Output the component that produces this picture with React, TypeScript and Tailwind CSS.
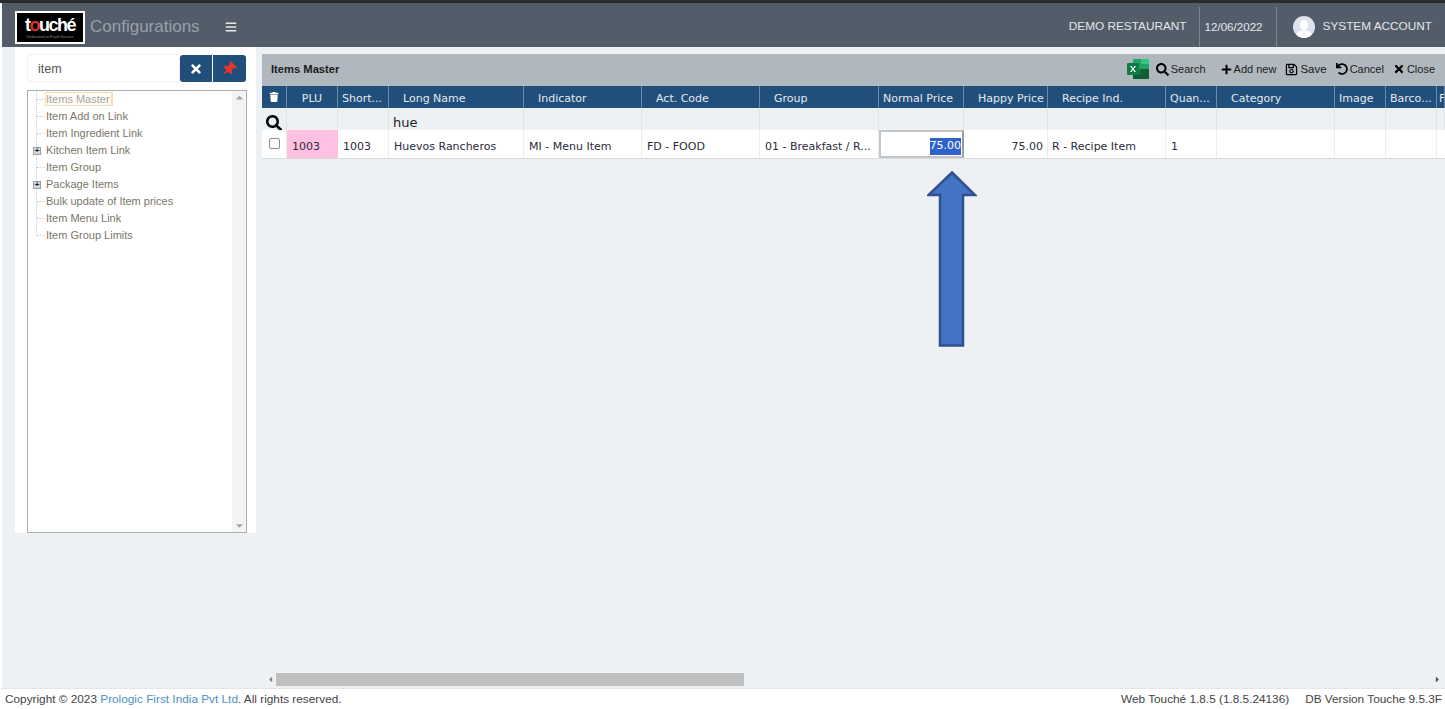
import { FaBars, FaPlus, FaRegSave, FaSearch, FaThumbtack, FaTimes, FaTrash, FaUndo, FaCaretDown, FaCaretLeft, FaCaretRight, FaCaretUp } from 'react-icons/fa';

const gridCols =
  'grid grid-cols-[25px_51px_51px_135px_118px_118px_119px_85px_84px_118px_51px_118px_51px_51px_8px]';

const columns = [
  { label: 'PLU', cls: 'justify-center' },
  { label: 'Short...', cls: 'pl-[4px]' },
  { label: 'Long Name', cls: 'pl-[14px]' },
  { label: 'Indicator', cls: 'pl-[14px]' },
  { label: 'Act. Code', cls: 'pl-[14px]' },
  { label: 'Group', cls: 'pl-[14px]' },
  { label: 'Normal Price', cls: 'pl-[4px]' },
  { label: 'Happy Price', cls: 'pl-[14px]' },
  { label: 'Recipe Ind.', cls: 'pl-[14px]' },
  { label: 'Quan...', cls: 'pl-[4px]' },
  { label: 'Category', cls: 'pl-[14px]' },
  { label: 'Image', cls: 'pl-[4px]' },
  { label: 'Barco...', cls: 'pl-[4px]' },
  { label: 'F', cls: 'pl-[2px]' },
];

const row = ['1003', 'Huevos Rancheros', 'MI - Menu Item', 'FD - FOOD', '01 - Breakfast / R...'];

const tree = [
  { label: 'Item Add on Link' },
  { label: 'Item Ingredient Link' },
  { label: 'Kitchen Item Link', expand: true },
  { label: 'Item Group' },
  { label: 'Package Items', expand: true },
  { label: 'Bulk update of Item prices' },
  { label: 'Item Menu Link' },
  { label: 'Item Group Limits', last: true },
];

function TreeRow({ label, expand, active, last }: { label: string; expand?: boolean; active?: boolean; last?: boolean }) {
  return (
    <div className="flex h-[17px] items-center">
      <div className="relative flex h-full w-[18px] items-center">
        <span className={`absolute left-[8px] w-0 border-l border-dotted border-[#cfcfcf] ${last ? 'top-0 h-[9px]' : 'top-0 h-full'}`} />
        {expand ? (
          <span className="relative ml-[5px] flex h-[8px] w-[8px] items-center justify-center border border-[#9aa0a8] bg-[#d5d9df] text-[8px] leading-none font-bold text-[#222]">
            +
          </span>
        ) : (
          <span className="ml-[9px] h-0 w-[8px] border-t border-dotted border-[#cfcfcf]" />
        )}
      </div>
      {active ? (
        <span className="-mt-[2px] -ml-px border border-r-2 border-[#fbdca8] bg-[#fffdf8] pr-[1px] leading-[12px] text-[#a5a5a5]">{label}</span>
      ) : (
        <span>{label}</span>
      )}
    </div>
  );
}

function ExcelIcon() {
  return (
    <svg width="22" height="20" viewBox="0 0 22 20">
      <rect x="6" y="0" width="16" height="20" rx="1" fill="#21a366" />
      <rect x="14" y="0" width="8" height="5" fill="#33c481" />
      <rect x="6" y="10" width="8" height="5" fill="#107c41" />
      <rect x="14" y="10" width="8" height="5" fill="#185c37" />
      <rect x="6" y="15" width="16" height="5" fill="#0f5f35" />
      <rect x="0" y="4" width="12" height="12" rx="1" fill="#107c41" />
      <path d="M3 7l1.600 0 1.400 2.200L7.400 7 9 7l-2.200 3L9 13H7.400L6 10.800 4.600 13H3l2.200-3z" fill="#fff" />
    </svg>
  );
}

function UserIcon() {
  return (
    <svg width="22" height="22" viewBox="0 0 22 22">
      <circle cx="11" cy="11" r="11" fill="#dfe3ee" />
      <ellipse cx="11" cy="9" rx="4" ry="5.200" fill="#fff" />
      <path d="M3.500 19c1-3.500 4-4.500 7.500-4.500s6.500 1 7.500 4.500A11 11 0 0 1 3.500 19z" fill="#fff" />
    </svg>
  );
}

function ToolButton({ icon, label, className }: { icon: React.ReactNode; label: string; className?: string }) {
  return (
    <span className={`flex items-center gap-[2px] ${className ?? ''}`}>
      {icon}
      <span>{label}</span>
    </span>
  );
}

export default function App() {
  return (
    <div className="flex h-[709px] w-[1445px] flex-col overflow-hidden bg-white font-['Liberation_Sans',sans-serif]">
      <div className="h-[3px] bg-[#2b2b2b]" />

      <header className="ml-[2px] flex h-[44px] items-center bg-[#535d6a] pt-[4px] text-[#e4e6e9]">
        <div className="ml-[13px] flex h-[33px] w-[70px] flex-col items-center justify-center border-2 border-white bg-black leading-none">
          <span className="text-[18px] font-bold tracking-[-1.5px] text-white">
            t<span className="text-[#d8321f]">o</span>uché
          </span>
          <span className="mt-[1px] text-[4px] text-[#888]">Dedicated to Food Service</span>
        </div>
        <span className="ml-[5px] text-[17px] text-[#98a0a9]">Configurations</span>
        <FaBars className="ml-[25px] text-[12px] text-[#e8e8e8]" />
        <div className="ml-auto flex h-full items-center text-[11.800px]">
          <span className="pr-[12px]">DEMO RESTAURANT</span>
          <span className="flex h-full w-[78px] items-center border-x border-[#7c858f] pl-[5px] text-[11.600px]">12/06/2022</span>
          <span className="ml-[16px] flex items-center gap-[8px] pr-[13px]">
            <UserIcon />
            SYSTEM ACCOUNT
          </span>
        </div>
      </header>

      <div className="ml-[2px] flex min-h-0 flex-1 bg-[#eef1f4]">
        <aside className="ml-[13px] flex h-[486px] w-[241px] flex-col bg-white pt-[7px] pl-[12px]">
          <div className="flex h-[28px] w-[219px]">
            <div className="flex w-[154px] items-center border border-[#eef0f2] pt-[2px] pl-[10px] text-[12.500px] text-[#555]">
              item
            </div>
            <button className="mt-px flex w-[32px] items-center justify-center rounded-l-[3px] bg-[#214f7c] text-[14px] text-white">
              <FaTimes />
            </button>
            <button className="mt-px ml-px flex w-[33px] items-center justify-center rounded-r-[3px] bg-[#214f7c] text-[14px] text-[#e5352b]">
              <FaThumbtack className="-ml-[2px] rotate-45" />
            </button>
          </div>
          <div className="mt-[8px] flex min-h-0 w-[220px] flex-1 border border-[#a9b0ad]">
            <div className="min-w-0 flex-1 text-[11px] text-[#7b7668]">
              <TreeRow label="Items Master" active />
              {tree.map((item) => (
                <TreeRow key={item.label} label={item.label} expand={item.expand} last={item.last} />
              ))}
            </div>
            <div className="flex w-[14px] flex-col items-center justify-between bg-[#f4f4f4] py-[1px] text-[11px] text-[#a3a3a3]">
              <FaCaretUp />
              <FaCaretDown />
            </div>
          </div>
        </aside>

        <main className="relative ml-[6px] flex min-w-0 flex-1 flex-col pt-[7px]">
          <div className="flex h-[32px] items-center justify-between bg-[#b0b7be] pr-[10px] pb-[2px] pl-[9px] text-[11px] text-[#1c1c1c]">
            <span className="text-[11.200px] font-bold">Items Master</span>
            <div className="flex items-center gap-[9px]">
              <ExcelIcon />
              <ToolButton icon={<FaSearch className="text-[13px] text-black" />} label="Search" className="mr-[6px] -ml-[2px]" />
              <ToolButton icon={<FaPlus className="text-[11px] text-black" />} label="Add new" />
              <ToolButton icon={<FaRegSave className="text-[13px] text-black" />} label="Save" className="pt-px text-[11.500px]" />
              <ToolButton icon={<FaUndo className="text-[12px] text-black" />} label="Cancel" />
              <ToolButton icon={<FaTimes className="text-[12px] text-black" />} label="Close" />
            </div>
          </div>

          <div className={`${gridCols} h-[22px] bg-[#214f7c] font-['DejaVu_Sans',sans-serif] text-[11px] text-[#e3e9ef]`}>
            <div className="flex items-center justify-center border-r border-[#6d8cab]">
              <FaTrash className="text-[10px] text-white" />
            </div>
            {columns.map((col) => (
              <div key={col.label} className={`flex items-center overflow-hidden border-r border-[#6d8cab] pt-[5px] whitespace-nowrap ${col.cls}`}>
                {col.label}
              </div>
            ))}
          </div>

          <div className={`${gridCols} h-[22px] font-['DejaVu_Sans',sans-serif] text-[13px] text-[#222]`}>
            <div className="flex items-center justify-center border-r border-[#e2e5e8] pt-[5px]">
              <FaSearch className="text-[16px] text-black" />
            </div>
            {columns.map((col) => (
              <div key={col.label} className="flex items-center border-r border-[#e2e5e8] pt-[5px] pl-[4px]">
                {col.label === 'Long Name' ? 'hue' : ''}
              </div>
            ))}
          </div>

          <div className={`${gridCols} h-[29px] border-b border-[#d8dbde] bg-white font-['DejaVu_Sans',sans-serif] text-[11px] text-[#2b2b3a]`}>
            <div className="flex items-center justify-center border-r border-[#eceef0] pb-[1px]">
              <span className="h-[11px] w-[11px] rounded-[2px] border border-[#8d8d8d] bg-white" />
            </div>
            <div className="flex items-center bg-[#ffc0e2] pt-[7px] pl-[5px]">1003</div>
            {row.map((value) => (
              <div key={value} className="flex items-center border-r border-[#eceef0] pt-[7px] pl-[5px] whitespace-nowrap">
                {value}
              </div>
            ))}
            <div className="flex items-center justify-end border-2 border-[#c3c6c9] border-r-[#9a9da0] pt-[5px] pr-px">
              <span className="bg-[#2f62c9] text-white">75.00</span>
            </div>
            <div className="flex items-center justify-end border-r border-[#eceef0] pt-[7px] pr-[4px]">75.00</div>
            <div className="flex items-center border-r border-[#eceef0] pt-[7px] pl-[4px]">R - Recipe Item</div>
            <div className="flex items-center border-r border-[#eceef0] pt-[7px] pl-[5px]">1</div>
            <div className="border-r border-[#eceef0]" />
            <div className="border-r border-[#eceef0]" />
            <div className="border-r border-[#eceef0]" />
            <div />
          </div>

          <div className="flex-1" />

          <div className="mb-[2px] flex h-[13px] items-center text-[9px] text-[#555]">
            <FaCaretLeft className="ml-[3px] w-[11px] shrink-0 text-[#888]" />
            <div className="h-[13px] w-[468px] bg-[#bfbfbf]" />
            <FaCaretRight className="mr-[3px] ml-auto" />
          </div>

          <svg className="absolute top-[124px] left-[665px]" width="50" height="176" viewBox="0 0 50 176">
            <path d="M25 1.500 48 24H36V174.500H13V24H1.500z" fill="#4472c4" stroke="#2f528f" strokeWidth="2.500" />
          </svg>
        </main>
      </div>

      <footer className="flex h-[21px] items-center justify-between border-t border-[#e6e6e6] bg-white pt-[1px] pr-[3px] pl-[5px] text-[11.800px] text-[#444]">
        <span>
          Copyright © 2023 <span className="text-[#4b8fc4]">Prologic First India Pvt Ltd</span>. All rights reserved.
        </span>
        <span className="flex gap-[16px]">
          <span>Web Touché 1.8.5 (1.8.5.24136)</span>
          <span>DB Version Touche 9.5.3F</span>
        </span>
      </footer>
    </div>
  );
}
